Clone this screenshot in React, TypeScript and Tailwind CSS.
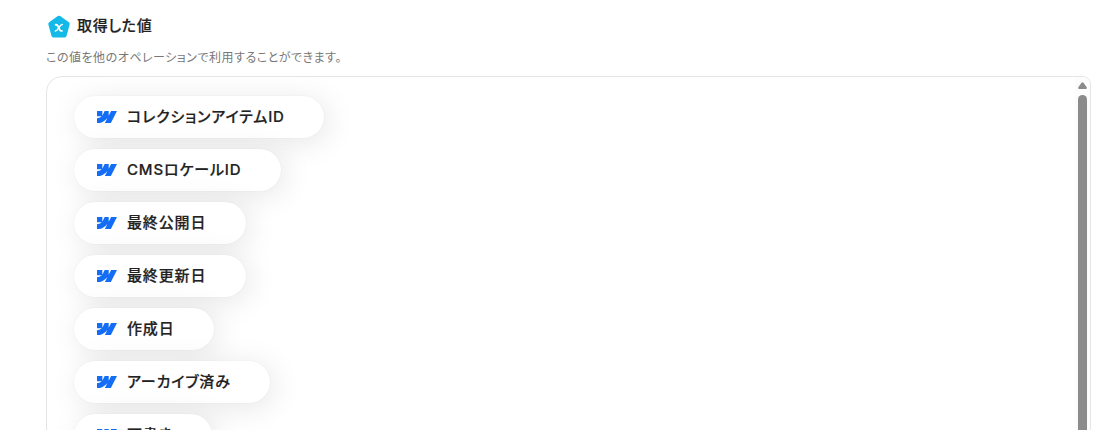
const items: { label: string; width: string }[] = [
  { label: 'コレクションアイテムID', width: 'w-[250px]' },
  { label: 'CMSロケールID', width: 'w-[207px]' },
  { label: '最終公開日', width: 'w-[172px]' },
  { label: '最終更新日', width: 'w-[172px]' },
  { label: '作成日', width: 'w-[140px]' },
  { label: 'アーカイブ済み', width: 'w-[196px]' },
  { label: '下書き', width: 'w-[138px]' },
];

function WebflowMark() {
  return (
    <svg viewBox="0 4.515 24 14.97" className="h-[12.5px] w-5 shrink-0" fill="#146ef5">
      <path d="m24 4.515-7.658 14.97H9.149l3.205-6.204h-.144C9.566 16.713 5.621 18.973 0 19.485v-6.118s3.596-.213 5.71-2.435H0V4.515h6.417v5.278l.144-.001 2.622-5.277h4.854v5.244h.144l2.72-5.244H24Z" />
    </svg>
  );
}

function VariableIcon() {
  return (
    <svg viewBox="0 0 24 24" className="size-6 shrink-0">
      <path
        d="M12 3.700 20.700 9.900 17.600 21.500H6.400L3.300 9.900Z"
        fill="#14b9e8"
        stroke="#14b9e8"
        strokeWidth="4"
        strokeLinejoin="round"
      />
      <path
        d="M8.700 10.700H9.300C10.500 10.700 10.800 11.400 11.600 13.500S13 16.900 14.100 16.900H14.900"
        fill="none"
        stroke="#fff"
        strokeWidth="1.9"
        strokeLinecap="round"
      />
      <path
        d="M15.300 10.600C13.700 10.600 13 12 11.900 13.600S10 16.900 8.300 16.900"
        fill="none"
        stroke="#fff"
        strokeWidth="1.500"
        strokeLinecap="round"
      />
    </svg>
  );
}

export default function App() {
  return (
    <div className="h-[430px] overflow-hidden bg-white pl-[46px] pr-2 pt-[14px] font-['Inter','Noto_Sans_CJK_JP',sans-serif] text-[#222] [font-feature-settings:'palt']">
      <div className="flex h-6 items-center gap-[6px] pl-px">
        <VariableIcon />
        <h1 className="text-[15px] font-medium leading-[22px] tracking-[0.7px] [-webkit-text-stroke:0.2px]">取得した値</h1>
      </div>
      <p className="mt-[11px] h-[18px] whitespace-nowrap text-xs leading-[18px] tracking-[0.52px] text-[#777]">
        この値を他のオペレーションで利用することができます。
      </p>
      <div className="mt-[9px] flex h-[500px] justify-between overflow-hidden rounded-2xl rounded-tr-lg border border-[#e5e5e5]">
        <div className="flex flex-col items-start gap-[11px] pl-[27px] pt-[19px]">
          {items.map(({ label, width }) => (
            <div
              key={label}
              className={`flex h-[42px] shrink-0 items-center gap-[10px] rounded-full bg-white pl-[23px] shadow-[0_0_2px_rgba(0,0,0,0.06),4px_4px_30px_rgba(0,0,0,0.1)] ${width}`}
            >
              <WebflowMark />
              <span className="whitespace-nowrap text-[15px] font-medium leading-6 tracking-[0.85px] [-webkit-text-stroke:0.2px]">{label}</span>
            </div>
          ))}
        </div>
        <div className="-mt-px flex w-[15px] flex-col items-center bg-[#fcfcfc] pt-[6px]">
          <svg viewBox="0 0 9 8" className="h-2 w-[9px] shrink-0" fill="#8b8b8b">
            <path d="M3.500 .7Q4.500-.3 5.500 .7L8.700 5.200Q9.300 7 7.700 7H1.300Q-.3 7 .3 5.200Z" />
          </svg>
          <div className="mt-[5px] w-[9px] grow rounded-full bg-[#8b8b8b]" />
        </div>
      </div>
    </div>
  );
}
